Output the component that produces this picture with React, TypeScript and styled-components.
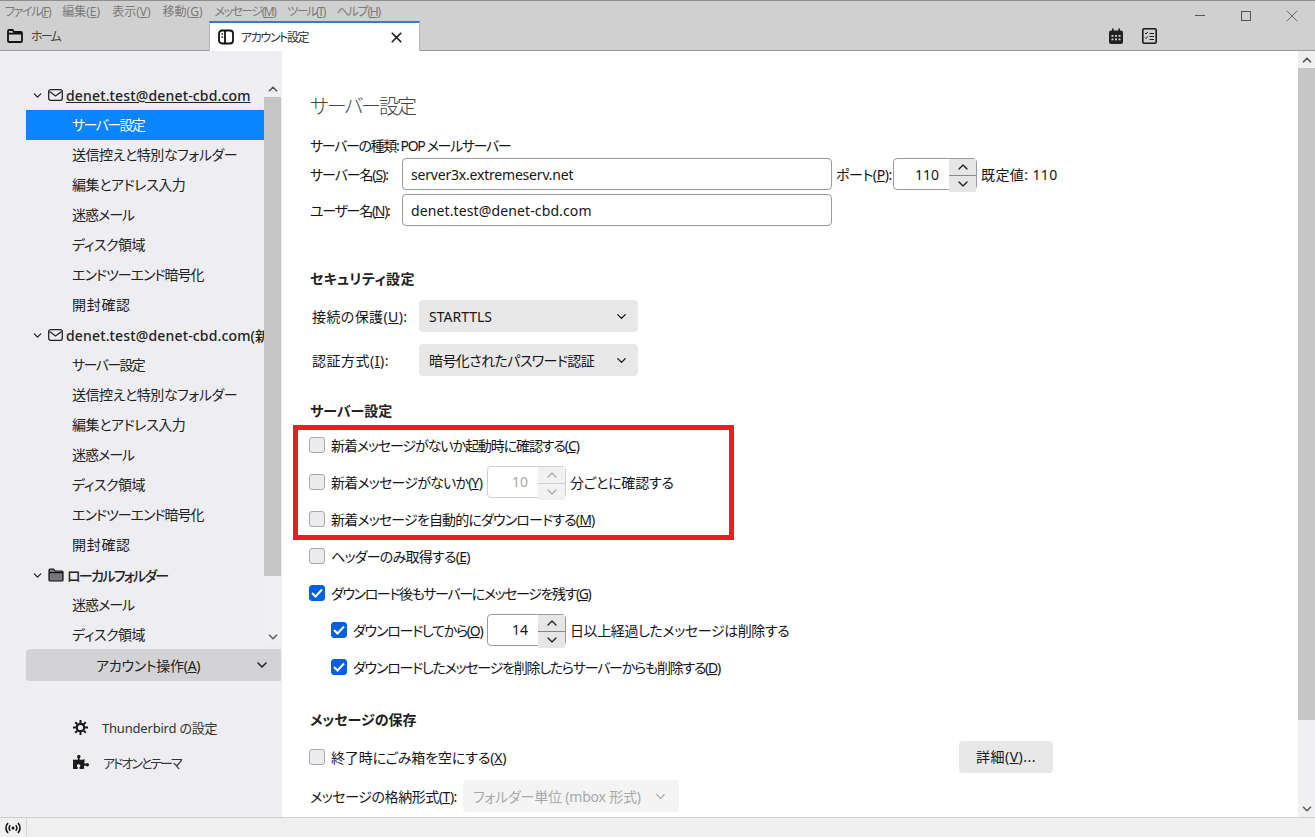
import { ReactNode } from 'react'
import styled, { createGlobalStyle } from 'styled-components'
import { ChevronDown, ChevronUp, X } from 'lucide-react'
import { FaPuzzlePiece } from 'react-icons/fa'

const GlobalStyle = createGlobalStyle`
  html, body {
    margin: 0;
    padding: 0;
    height: 100%;
    overflow: hidden;
  }
  body {
    font-family: 'Noto Sans', 'Noto Sans CJK JP', sans-serif;
    font-size: 14px;
    font-feature-settings: 'palt';
    color: #15141a;
  }
  * {
    box-sizing: border-box;
  }
`

const FolderIcon = ({ filled }: { filled?: boolean }) => (
  <svg width='16' height='14' viewBox='0 0 16 14' fill={filled ? '#77777c' : 'none'} stroke='#111' strokeWidth={filled ? 1.2 : 1.8}>
    <path d='M1 12V2.2C1 1.5 1.5 1 2.2 1h3.4l1.5 2h6.7c.7 0 1.2.5 1.2 1.2V12c0 .6-.5 1-1.2 1H2.2C1.5 13 1 12.6 1 12z' />
    <path d='M1 4.600h14' />
  </svg>
)

const PanelIcon = () => (
  <svg width='16' height='16' viewBox='0 0 16 16' fill='none' stroke='#111' strokeWidth='1.8'>
    <rect x='1' y='1.500' width='14' height='13' rx='3' />
    <path d='M7 1.500v13' />
    <path d='M3.500 5h1.600M3.500 8h1.600' strokeWidth='1.300' />
  </svg>
)

const CalendarIcon = () => (
  <svg width='14' height='16' viewBox='0 0 14 16'>
    <path d='M3 0.500h1.600v2H9.400v-2H11v2h1c1 0 2 .8 2 2V14c0 1-.9 2-2 2H2c-1.100 0-2-1-2-2V4.500c0-1.200 1-2 2-2h1z' fill='#222' />
    <path d='M2.500 7h2v1.800h-2zM6 7h2v1.800H6zM9.500 7h2v1.800h-2zM2.500 10.500h2v1.800h-2zM6 10.500h2v1.800H6zM9.500 10.500h2v1.800h-2z' fill='#d0d0d0' />
  </svg>
)

const TasksIcon = () => (
  <svg width='15' height='16' viewBox='0 0 15 16' fill='none'>
    <rect x='0.800' y='0.800' width='13.400' height='14.400' rx='1.500' stroke='#1a1a1a' strokeWidth='1.600' />
    <path d='M3 5l1 1 1.800-2M3 9.500l1 1 1.800-2' stroke='#1a1a1a' strokeWidth='1' />
    <path d='M7.500 5.500H12M7.500 8.500H12M7.500 11.500H12' stroke='#1a1a1a' strokeWidth='1.100' />
  </svg>
)

const MailIcon = () => (
  <svg width='15' height='12' viewBox='0 0 15 12' fill='none' stroke='#222' strokeWidth='1.300'>
    <rect x='0.700' y='0.700' width='13.600' height='10.600' rx='2' />
    <path d='M1.500 2.500l6 4.500 6-4.500' />
  </svg>
)

const GearIcon = () => (
  <svg width='15' height='15' viewBox='0 0 15 15' fill='none' stroke='#1a1a1a'>
    <circle cx='7.500' cy='7.500' r='3.700' strokeWidth='2.200' />
    <path d='M7.500 0v3M7.500 12v3M0 7.500h3M12 7.500h3M2.200 2.200l2.100 2.100M10.700 10.700l2.100 2.100M2.200 12.800l2.100-2.100M10.700 4.300l2.100-2.100' strokeWidth='2' />
  </svg>
)

const BroadcastIcon = () => (
  <svg width='16' height='12' viewBox='0 0 16 12' fill='none' stroke='#111' strokeWidth='1.600'>
    <circle cx='8' cy='6' r='1.500' fill='#111' stroke='none' />
    <path d='M5.300 3.200a4 4 0 0 0 0 5.600M10.700 3.200a4 4 0 0 1 0 5.600M3 1a7.200 7.200 0 0 0 0 10M13 1a7.200 7.200 0 0 1 0 10' />
  </svg>
)

const CheckMark = () => (
  <svg width='12' height='10' viewBox='0 0 12 10' fill='none' stroke='#fff' strokeWidth='2'>
    <path d='M1 5l3.500 3.500L11 1.500' />
  </svg>
)

// letter spacing per label, the kana of the UI font are narrower than Noto's
const menus: [string, string, number][] = [
  ['ファイル', 'F', -1.4],
  ['編集', 'E', 0],
  ['表示', 'V', 0],
  ['移動', 'G', 0],
  ['メッセージ', 'M', -1.5],
  ['ツール', 'T', -1.8],
  ['ヘルプ', 'H', -1.2],
]

const accountItems: [string, number][] = [
  ['サーバー設定', -1.6],
  ['送信控えと特別なフォルダー', -0.45],
  ['編集とアドレス入力', -0.45],
  ['迷惑メール', -1],
  ['ディスク領域', -0.5],
  ['エンドツーエンド暗号化', -1],
  ['開封確認', 0.7],
]

const Scrollbar = ({ thumbHeight }: { thumbHeight: number }) => (
  <ScrollTrack>
    <ScrollArrow>
      <ChevronUp size={14} strokeWidth={3} color='#555' />
    </ScrollArrow>
    <ScrollThumb style={{ height: thumbHeight }} />
    <ScrollRest />
    <ScrollArrow>
      <ChevronDown size={14} strokeWidth={3} color='#666' />
    </ScrollArrow>
  </ScrollTrack>
)

const Check = ({ checked, children, indent }: { checked?: boolean; children: ReactNode; indent?: boolean }) => (
  <CheckRow $indent={indent}>
    <CheckBox $checked={checked}>{checked && <CheckMark />}</CheckBox>
    {children}
  </CheckRow>
)

const Spinner = ({ value, disabled, width = 79 }: { value: number; disabled?: boolean; width?: number }) => (
  <SpinBox $disabled={disabled} $width={width}>
    <SpinValue>{value}</SpinValue>
    <SpinButtons $disabled={disabled}>
      <SpinButton $disabled={disabled}>
        <ChevronUp size={16} strokeWidth={2} />
      </SpinButton>
      <SpinButton $disabled={disabled}>
        <ChevronDown size={16} strokeWidth={2} />
      </SpinButton>
    </SpinButtons>
  </SpinBox>
)

const App = () => {
  return (
    <Window>
      <GlobalStyle />
      <TitleBar>
        <TopRow>
          <MenuBar>
            {menus.map(([name, key, ls]) => (
              <MenuItem key={name} $ls={ls}>
                {name}(<u>{key}</u>)
              </MenuItem>
            ))}
          </MenuBar>
          <WindowControls>
            <MinimizeGlyph />
            <MaximizeGlyph />
            <CloseGlyph size={20} strokeWidth={1} color='#555' />
          </WindowControls>
        </TopRow>
        <TabRow>
          <HomeTab>
            <FolderIcon />
            <Txt $ls={-1.8}>ホーム</Txt>
          </HomeTab>
          <ActiveTab>
            <PanelIcon />
            <TabLabel>アカウント設定</TabLabel>
            <X size={17} strokeWidth={2.4} color='#222' />
          </ActiveTab>
          <TabTools>
            <CalendarIcon />
            <TasksIcon />
          </TabTools>
        </TabRow>
      </TitleBar>

      <Body>
        <Sidebar>
          <TreeArea>
            <Tree>
              <TreeHead $underline>
                <ChevronDown size={13} strokeWidth={2.4} />
                <MailIcon />
                <HeadText $ls={0.15}>denet.test@denet-cbd.com</HeadText>
              </TreeHead>
              {accountItems.map(([item, ls], i) => (
                <TreeItem key={item} $selected={i === 0} $ls={ls}>
                  {item}
                </TreeItem>
              ))}
              <TreeHead>
                <ChevronDown size={13} strokeWidth={2.4} />
                <MailIcon />
                <HeadText $ls={0.15}>denet.test@denet-cbd.com(新</HeadText>
              </TreeHead>
              {accountItems.map(([item, ls]) => (
                <TreeItem key={item} $ls={ls}>
                  {item}
                </TreeItem>
              ))}
              <TreeHead>
                <ChevronDown size={13} strokeWidth={2.4} />
                <FolderIcon filled />
                <HeadText $ls={-1.7}>ローカルフォルダー</HeadText>
              </TreeHead>
              <TreeItem $ls={-1}>迷惑メール</TreeItem>
              <TreeItem $ls={-0.5}>ディスク領域</TreeItem>
            </Tree>
            <Scrollbar thumbHeight={479} />
          </TreeArea>
          <AccountButton>
            <Txt $ls={-0.3}>
              アカウント操作(<u>A</u>)
            </Txt>
            <ChevronDown size={16} strokeWidth={2.4} />
          </AccountButton>
          <SideLinks>
            <SideLink>
              <GearIcon />
              <Txt $ls={-0.2}>Thunderbird の設定</Txt>
            </SideLink>
            <SideLink>
              <FaPuzzlePiece size={16} color='#1a1a1a' />
              <Txt $ls={-2}>アドオンとテーマ</Txt>
            </SideLink>
          </SideLinks>
        </Sidebar>

        <Content>
          <PageTitle>サーバー設定</PageTitle>
          <InfoRow>サーバーの種類: POP メールサーバー</InfoRow>
          <FieldRow>
            <FieldLabel $ls={-1.1}>
              サーバー名(<u>S</u>):
            </FieldLabel>
            <TextField readOnly value='server3x.extremeserv.net' $ls={-0.2} />
            <PortLabel>
              ポート(<u>P</u>):
            </PortLabel>
            <Spinner value={110} width={84} />
            <Txt $ls={0.4}>既定値: 110</Txt>
          </FieldRow>
          <FieldRow $gap={4}>
            <FieldLabel $ls={-1.3}>
              ユーザー名(<u>N</u>):
            </FieldLabel>
            <TextField readOnly value='denet.test@denet-cbd.com' $ls={0.12} />
          </FieldRow>

          <SectionHead $top={42} $ls={0.4}>
            セキュリティ設定
          </SectionHead>
          <SelectRow $top={10}>
            <SelectLabel $ls={0.4}>
              接続の保護(<u>U</u>):
            </SelectLabel>
            <Select>
              <Txt>STARTTLS</Txt>
              <ChevronDown size={15} strokeWidth={2.2} />
            </Select>
          </SelectRow>
          <SelectRow $top={12}>
            <SelectLabel $ls={0.5}>
              認証方式(<u>I</u>):
            </SelectLabel>
            <Select>
              <Txt $ls={-0.6}>暗号化されたパスワード認証</Txt>
              <ChevronDown size={15} strokeWidth={2.2} />
            </Select>
          </SelectRow>

          <SectionHead $top={24}>サーバー設定</SectionHead>
          <CheckList>
            <Check>
              <Txt $ls={-1.1}>
                新着メッセージがないか起動時に確認する(<u>C</u>)
              </Txt>
            </Check>
            <Check>
              <CheckLabel $ls={-0.8} $width={156}>
                新着メッセージがないか(<u>Y</u>)
              </CheckLabel>
              <Spinner value={10} disabled />
              <Txt $ls={-0.2}>分ごとに確認する</Txt>
            </Check>
            <Check>
              <Txt $ls={-0.85}>
                新着メッセージを自動的にダウンロードする(<u>M</u>)
              </Txt>
            </Check>
            <Check>
              <Txt $ls={-0.75}>
                ヘッダーのみ取得する(<u>E</u>)
              </Txt>
            </Check>
            <Check checked>
              <Txt $ls={-1.4}>
                ダウンロード後もサーバーにメッセージを残す(<u>G</u>)
              </Txt>
            </Check>
            <Check checked indent>
              <CheckLabel $ls={-1.25} $width={134}>
                ダウンロードしてから(<u>O</u>)
              </CheckLabel>
              <Spinner value={14} />
              <Txt $ls={-0.4}>日以上経過したメッセージは削除する</Txt>
            </Check>
            <Check checked indent>
              <Txt $ls={-1.25}>
                ダウンロードしたメッセージを削除したらサーバーからも削除する(<u>D</u>)
              </Txt>
            </Check>
          </CheckList>

          <SectionHead $top={24}>メッセージの保存</SectionHead>
          <StorageRow>
            <Check>
              <Txt $ls={-0.15}>
                終了時にごみ箱を空にする(<u>X</u>)
              </Txt>
            </Check>
            <PlainButton>
              <Txt $ls={0.5}>
                詳細(<u>V</u>)...
              </Txt>
            </PlainButton>
          </StorageRow>
          <FormatRow>
            <Txt $ls={-0.45}>
              メッセージの格納形式(<u>T</u>):
            </Txt>
            <DisabledSelect>
              <Txt $ls={-0.2}>フォルダー単位 (mbox 形式)</Txt>
              <ChevronDown size={15} strokeWidth={2} />
            </DisabledSelect>
          </FormatRow>

          <Highlight />
        </Content>
        <Scrollbar thumbHeight={652} />
      </Body>

      <StatusBar>
        <StatusCell>
          <BroadcastIcon />
        </StatusCell>
      </StatusBar>
    </Window>
  )
}

export default App

const Txt = styled.span<{ $ls?: number }>`
  letter-spacing: ${({ $ls }) => $ls ?? 0}px;
  white-space: nowrap;
`
const CheckLabel = styled(Txt)<{ $width: number }>`
  flex: 0 0 ${({ $width }) => $width}px;
`
const Window = styled.div`
  width: 1315px;
  height: 837px;
  display: flex;
  flex-direction: column;
  overflow: hidden;
  background: #fff;
`
const TitleBar = styled.header`
  flex: 0 0 51px;
  min-height: 0;
  display: flex;
  flex-direction: column;
  background: #d0d0d0;
  border-top: 1px solid #8e8e8e;
  border-bottom: 1px solid #9a9a9a;
`
const TopRow = styled.div`
  flex: 0 0 20px;
  min-height: 0;
  display: flex;
  justify-content: space-between;
  position: relative;
  z-index: 1;
`
const MenuBar = styled.nav`
  display: flex;
  gap: 12px;
  padding: 2px 0 0 5px;
`
const MenuItem = styled.span<{ $ls: number }>`
  font-size: 12px;
  line-height: 17px;
  letter-spacing: ${({ $ls }) => $ls}px;
  color: #7a7a7a;
`
const WindowControls = styled.div`
  display: flex;
  align-items: center;
  gap: 36px;
  height: 30px;
  padding-right: 13px;
`
const MinimizeGlyph = styled.span`
  width: 10px;
  height: 1px;
  margin-top: -2px;
  background: #555;
`
const MaximizeGlyph = styled.span`
  width: 10px;
  height: 10px;
  border: 1px solid #555;
`
const CloseGlyph = styled(X)`
  margin-left: -5px;
`
const TabRow = styled.div`
  flex: 1;
  min-height: 0;
  display: flex;
  align-items: stretch;
`
const HomeTab = styled.div`
  width: 209px;
  display: flex;
  align-items: center;
  gap: 8px;
  padding-left: 7px;
  font-size: 12px;
  color: #444;
`
const ActiveTab = styled.div`
  width: 211px;
  margin-bottom: -1px;
  display: flex;
  align-items: center;
  gap: 7px;
  padding: 0 14px 0 8px;
  background: #fff;
  border-top: 2px solid #3a7cc0;
  border-left: 1px solid #b5b5b5;
  border-right: 1px solid #b5b5b5;
  font-size: 12px;
  letter-spacing: -1.4px;
  color: #333;
`
const TabLabel = styled.span`
  flex: 1;
`
const TabTools = styled.div`
  margin-left: auto;
  display: flex;
  align-items: center;
  gap: 19px;
  padding-right: 158px;
`
const Body = styled.div`
  flex: 1;
  min-height: 0;
  display: flex;
`
const Sidebar = styled.aside`
  flex: 0 0 282px;
  min-width: 0;
  display: flex;
  flex-direction: column;
  padding: 29px 1px 0 26px;
  background: #eeeef2;
`
const TreeArea = styled.div`
  flex: 0 0 565px;
  display: flex;
  min-height: 0;
`
const Tree = styled.div`
  flex: 1;
  min-width: 0;
  overflow: hidden;
`
const TreeHead = styled.div<{ $underline?: boolean }>`
  height: 30px;
  display: flex;
  align-items: center;
  padding-left: 5px;
  gap: 3px;
  font-size: 14px;
  font-weight: 500;
  color: #222;
  white-space: nowrap;
  overflow: hidden;
  text-decoration: ${({ $underline }) => ($underline ? 'underline' : 'none')};
  svg {
    flex: none;
  }
  svg:first-child {
    margin-right: 1px;
  }
`
const HeadText = styled(Txt)`
  flex: none;
`
const TreeItem = styled.div<{ $selected?: boolean; $ls: number }>`
  height: 30px;
  line-height: 30px;
  padding-left: 46px;
  white-space: nowrap;
  letter-spacing: ${({ $ls }) => $ls}px;
  background: ${({ $selected }) => ($selected ? '#0a84ff' : 'transparent')};
  color: ${({ $selected }) => ($selected ? '#fff' : '#222')};
`
const ScrollTrack = styled.div`
  flex: 0 0 17px;
  display: flex;
  flex-direction: column;
  background: #f0f0f2;
`
const ScrollArrow = styled.div`
  flex: 0 0 17px;
  display: flex;
  align-items: center;
  justify-content: center;
`
const ScrollThumb = styled.div`
  background: #c6c6c6;
`
const ScrollRest = styled.div`
  flex: 1;
`
const AccountButton = styled.div`
  flex: 0 0 32px;
  margin-top: 4px;
  display: flex;
  align-items: center;
  justify-content: space-between;
  padding: 0 11px 0 70px;
  background: #d3d3d5;
  border-radius: 4px 0 0 4px;
  color: #222;
`
const SideLinks = styled.div`
  display: flex;
  flex-direction: column;
  margin-top: 32px;
  gap: 7px;
  padding-left: 47px;
`
const SideLink = styled.div`
  height: 28px;
  display: flex;
  align-items: center;
  gap: 14px;
  color: #333;
  font-size: 13px;
`
const Content = styled.main`
  flex: 1;
  min-width: 0;
  position: relative;
  padding: 41px 0 0 28px;
  overflow: hidden;
`
const PageTitle = styled.h1`
  margin: 0 0 13px;
  height: 30px;
  line-height: 30px;
  font-size: 20px;
  font-weight: 300;
  letter-spacing: -2px;
  color: #444;
`
const InfoRow = styled.div`
  height: 22px;
  line-height: 22px;
  letter-spacing: -1.35px;
`
const FieldRow = styled.div<{ $gap?: number }>`
  display: flex;
  align-items: center;
  height: 32px;
  margin-top: ${({ $gap }) => $gap ?? 1}px;
  white-space: nowrap;
`
const FieldLabel = styled.label<{ $ls: number }>`
  flex: 0 0 92px;
  letter-spacing: ${({ $ls }) => $ls}px;
`
const TextField = styled.input<{ $ls: number }>`
  width: 430px;
  height: 32px;
  padding: 0 8px;
  border: 1px solid #9a9aa0;
  border-radius: 4px;
  outline: none;
  font: inherit;
  font-feature-settings: inherit;
  letter-spacing: ${({ $ls }) => $ls}px;
  color: #15141a;
`
const PortLabel = styled.label`
  flex: none;
  width: 53px;
  margin: 0 4px;
  letter-spacing: -0.4px;
`
const SpinBox = styled.div<{ $disabled?: boolean; $width: number }>`
  flex: none;
  width: ${({ $width }) => $width}px;
  height: 32px;
  display: flex;
  align-items: stretch;
  margin-right: 4px;
  border: 1px solid ${({ $disabled }) => ($disabled ? '#d0d0d0' : '#9a9aa0')};
  border-radius: 4px;
  color: ${({ $disabled }) => ($disabled ? '#a8a8a8' : '#15141a')};
  background: #fff;
`
const SpinValue = styled.span`
  flex: 1;
  align-self: center;
  text-align: right;
  padding-right: 10px;
`
const SpinButtons = styled.div<{ $disabled?: boolean }>`
  flex: 0 0 27px;
  display: flex;
  flex-direction: column;
  gap: 1px;
  background: ${({ $disabled }) => ($disabled ? '#cfcfcf' : '#888')};
`
const SpinButton = styled.div<{ $disabled?: boolean }>`
  flex: 1;
  display: flex;
  align-items: center;
  justify-content: center;
  background: ${({ $disabled }) => ($disabled ? '#f1f1f1' : '#e6e6e6')};
  color: ${({ $disabled }) => ($disabled ? '#aaa' : '#222')};
`
const SectionHead = styled.h2<{ $top: number; $ls?: number }>`
  margin: ${({ $top }) => $top}px 0 0;
  height: 22px;
  line-height: 22px;
  font-size: 14px;
  font-weight: 700;
  letter-spacing: ${({ $ls }) => $ls ?? 0}px;
  color: #222;
`
const SelectRow = styled.div<{ $top: number }>`
  display: flex;
  align-items: center;
  height: 32px;
  margin-top: ${({ $top }) => $top}px;
  padding-left: 2px;
`
const SelectLabel = styled.label<{ $ls: number }>`
  flex: 0 0 107px;
  letter-spacing: ${({ $ls }) => $ls}px;
`
const Select = styled.div`
  width: 219px;
  height: 32px;
  display: flex;
  align-items: center;
  justify-content: space-between;
  padding: 0 9px 0 10px;
  background: #e8e8e8;
  border-radius: 4px;
`
const CheckList = styled.div`
  margin-top: 4px;
  display: flex;
  flex-direction: column;
`
const CheckRow = styled.div<{ $indent?: boolean }>`
  height: 37px;
  display: flex;
  align-items: center;
  margin-left: ${({ $indent }) => ($indent ? 21 : -1)}px;
  white-space: nowrap;
`
const CheckBox = styled.span<{ $checked?: boolean }>`
  flex: none;
  width: 16px;
  height: 16px;
  margin-right: 6px;
  display: flex;
  align-items: center;
  justify-content: center;
  border-radius: 3px;
  border: 1px solid ${({ $checked }) => ($checked ? '#0060df' : '#a8a8a8')};
  background: ${({ $checked }) => ($checked ? '#0060df' : '#ececee')};
`
const StorageRow = styled.div`
  width: 743px;
  height: 37px;
  margin-top: 7px;
  display: flex;
  align-items: center;
  justify-content: space-between;
`
const PlainButton = styled.div`
  width: 94px;
  height: 32px;
  line-height: 32px;
  text-align: center;
  background: #e8e8e8;
  border-radius: 4px;
`
const FormatRow = styled.div`
  height: 32px;
  margin-top: 5px;
  display: flex;
  align-items: center;
  gap: 6px;
`
const DisabledSelect = styled.div`
  width: 216px;
  height: 32px;
  display: flex;
  align-items: center;
  justify-content: space-between;
  padding: 0 11px 0 10px;
  background: #f4f4f5;
  border-radius: 4px;
  color: #a8a8a8;
`
const Highlight = styled.div`
  position: absolute;
  left: 11px;
  top: 374px;
  width: 441px;
  height: 115px;
  border: 5px solid #ed1c24;
  pointer-events: none;
`
const StatusBar = styled.footer`
  flex: 0 0 20px;
  display: flex;
  background: #f0f0f0;
  border-top: 1px solid #cfcfcf;
`
const StatusCell = styled.div`
  width: 27px;
  display: flex;
  align-items: center;
  justify-content: center;
  border-right: 1px solid #d8d8d8;
`
